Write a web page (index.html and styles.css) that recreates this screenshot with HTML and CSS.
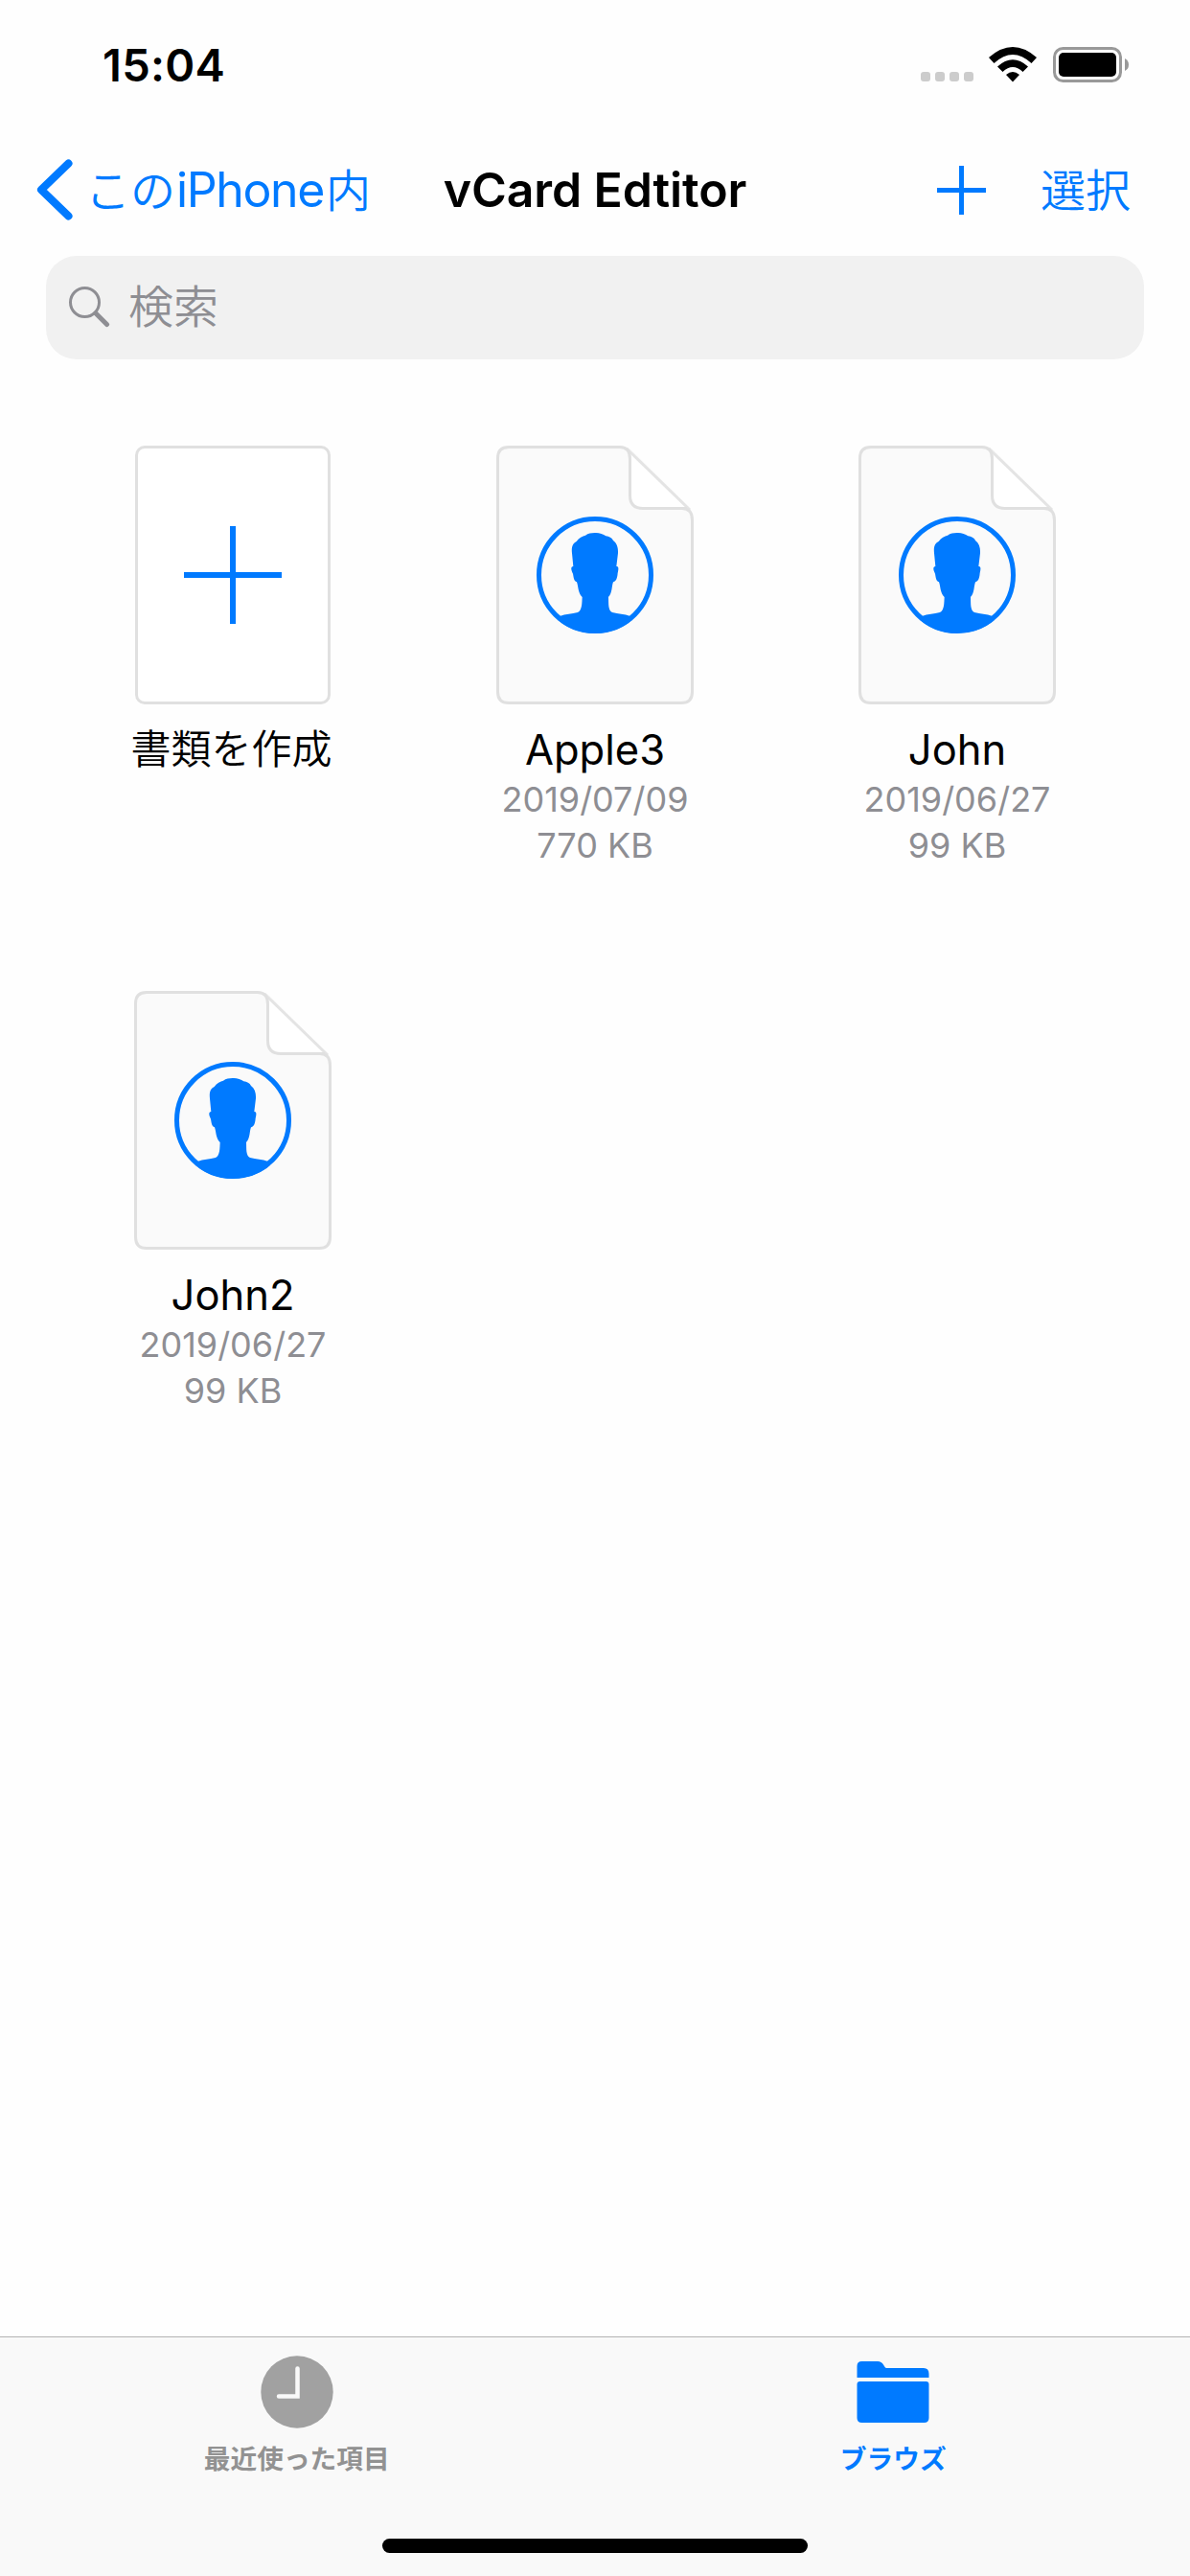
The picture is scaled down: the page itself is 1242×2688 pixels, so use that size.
FILE: index.html
```html
<!DOCTYPE html>
<html lang="ja">
<head>
    <meta charset="UTF-8">
    <meta name="viewport" content="width=device-width, initial-scale=1.0">
    <title>vCard Edtitor</title>
    <link rel="stylesheet" href="styles.css">
</head>
<body>
    <svg class="defs" width="0" height="0">
        <symbol id="contact-file" viewBox="0 0 206 270">
            <path d="M13 1.500H133Q138 1.500 142 5.500L201 65Q204.500 68.500 204.500 75V257Q204.500 268.500 193 268.500H13Q1.500 268.500 1.500 257V13Q1.500 1.500 13 1.500Z" fill="#fafafa"/>
            <path d="M139.500 4V52Q139.500 65.500 153 65.500H199Z" fill="#fff"/>
            <path d="M136 3L202 67" fill="none" stroke="#e4e4e4" stroke-width="3"/>
            <path d="M199 65.500H153Q139.500 65.500 139.500 52V14Q139.500 1.500 129 1.500H13Q1.500 1.500 1.500 13V257Q1.500 268.500 13 268.500H193Q204.500 268.500 204.500 257V78Q204.500 65.500 194 65.500" fill="none" stroke="#e0e0e0" stroke-width="3"/>
            <circle cx="103" cy="135" r="58.500" fill="none" stroke="#007aff" stroke-width="5"/>
            <path transform="translate(-18 -25) scale(.33333)" fill="#007aff" d="M362 348C375 347 388 351 397 358C407 360 416 363 420 372C432 381 436 395 435 412L430 453C438 452 437 462 434 474C433 490 429 500 420 502C415 514 418 536 405 549C406 568 403 590 417 597C436 602 454 601 474 609L480 620A183 183 0 0 1 246 620L252 609C272 601 290 602 309 597C323 590 322 568 323 549C309 536 311 514 306 502C296 498 296 486 294 476C288 464 286 454 295 453L291 412C289 393 292 382 305 375C313 363 324 359 333 356C342 349 351 349 362 348Z"/>
        </symbol>
    </svg>

    <div class="status-bar">
        <div class="time">15:04</div>
        <div class="status-icons">
            <div class="signal"><i></i><i></i><i></i><i></i></div>
            <svg class="wifi" width="50" height="37" viewBox="0 0 50 37">
                <path d="M0 11Q25 -11 50 11L44.500 17Q25 -1 5.500 17Z"/>
                <path d="M9 20.500Q25 6 41 20.500L35.500 26Q25 16 14.500 26Z"/>
                <path d="M18 29Q25 23 32 29L25 36.500Z"/>
            </svg>
            <svg class="battery" width="80" height="37" viewBox="0 0 80 37">
                <rect x="1.500" y="1.500" width="69" height="34" rx="9" fill="none" stroke="#999" stroke-width="3"/>
                <rect x="6" y="6" width="60" height="25" rx="5"/>
                <path d="M75 12Q79 14 79 18.500T75 25Z" fill="#999"/>
            </svg>
        </div>
    </div>

    <div class="nav-bar">
        <div class="back">
            <svg width="38" height="64" viewBox="0 0 38 64">
                <path d="M33.500 4.500L5 32L33.500 59.500" fill="none" stroke="#007aff" stroke-width="8" stroke-linecap="round" stroke-linejoin="round"/>
            </svg>
            <div class="back-label">この<span class="latin">iPhone</span>内</div>
        </div>
        <div class="title">vCard Edtitor</div>
        <div class="actions">
            <svg width="51" height="51" viewBox="0 0 51 51">
                <path d="M0 25.500H51M25.500 0V51" stroke="#007aff" stroke-width="5"/>
            </svg>
            <div class="select">選択</div>
        </div>
    </div>

    <div class="search">
        <svg width="44" height="44" viewBox="0 0 44 44">
            <circle cx="17.500" cy="17.500" r="15" fill="none" stroke="#8e8e93" stroke-width="3"/>
            <path d="M29 29L40.500 40.500" stroke="#8e8e93" stroke-width="5" stroke-linecap="round"/>
        </svg>
        <div class="placeholder">検索</div>
    </div>

    <div class="files">
        <div class="file">
            <div class="new-file">
                <svg width="102" height="102" viewBox="0 0 102 102">
                    <path d="M0 51H102M51 0V102" stroke="#007aff" stroke-width="6"/>
                </svg>
            </div>
            <div class="name name-ja">書類を作成</div>
        </div>
        <div class="file">
            <svg class="thumb" width="206" height="270"><use href="#contact-file"/></svg>
            <div class="name">Apple3</div>
            <div class="meta">2019/07/09</div>
            <div class="meta">770 KB</div>
        </div>
        <div class="file">
            <svg class="thumb" width="206" height="270"><use href="#contact-file"/></svg>
            <div class="name">John</div>
            <div class="meta">2019/06/27</div>
            <div class="meta">99 KB</div>
        </div>
        <div class="file">
            <svg class="thumb" width="206" height="270"><use href="#contact-file"/></svg>
            <div class="name">John2</div>
            <div class="meta">2019/06/27</div>
            <div class="meta">99 KB</div>
        </div>
    </div>

    <div class="bottom">
        <div class="tabs">
            <div class="tab">
                <svg width="76" height="76" viewBox="0 0 76 76">
                    <circle cx="38" cy="38" r="37.700" fill="#a1a1a1"/>
                    <path d="M38.500 13.500V42.500H19" fill="none" stroke="#f9f9f9" stroke-width="4.500" stroke-linecap="round"/>
                </svg>
                <div class="tab-label">最近使った項目</div>
            </div>
            <div class="tab active">
                <svg width="76" height="76" viewBox="0 0 76 76">
                    <path d="M0.500 23V11Q0.500 6 5.500 6H22Q26 6 28 9.500T31 13H70Q75.500 13 75.500 19V23Z"/>
                    <path d="M3.500 27H72.500Q75.500 27 75.500 30V65Q75.500 70 70.500 70H5.500Q0.500 70 0.500 65V30Q0.500 27 3.500 27Z"/>
                </svg>
                <div class="tab-label">ブラウズ</div>
            </div>
        </div>
        <div class="home-indicator"></div>
    </div>
</body>
</html>
```
FILE: styles.css
```css
* {
    box-sizing: border-box;
}
body {
    margin: 0;
    width: 1242px;
    height: 2688px;
    display: flex;
    flex-direction: column;
    overflow: hidden;
    background-color: #fefefe;
    color: #000;
    font-family: Inter, "Noto Sans CJK JP", sans-serif;
}
svg {
    display: block;
    flex: none;
}
.defs {
    position: absolute;
}
.status-bar {
    height: 132px;
    padding: 44px 63px 0 107px;
    display: flex;
    justify-content: space-between;
    align-items: flex-start;
}
.time {
    font-size: 47px;
    line-height: 48px;
    font-weight: 600;
    letter-spacing: 0.3px;
}
.status-icons {
    display: flex;
    align-items: flex-end;
    padding-top: 5px;
}
.signal {
    display: flex;
    gap: 5px;
    margin: 0 16px 1px 0;
}
.signal i {
    width: 10px;
    height: 10px;
    border-radius: 3px;
    background-color: #ccc;
}
.battery {
    margin-left: 17px;
}
.nav-bar {
    height: 135px;
    padding: 0 62px 3px 38px;
    display: grid;
    grid-template-columns: 382px 1fr 358px;
    align-items: center;
    font-size: 50px;
    line-height: 60px;
    white-space: nowrap;
}
.back, .actions {
    display: flex;
    align-items: center;
    color: #007aff;
    font-family: "Noto Sans CJK JP", sans-serif;
    font-size: 47px;
    font-weight: 350;
}
.back-label {
    margin: -3px 0 0 13px;
}
.latin {
    margin: 0 2px 0 1px;
    font-family: Inter, sans-serif;
    font-size: 50px;
    font-weight: 400;
    letter-spacing: -1.4px;
}
.title {
    text-align: center;
    font-weight: 600;
    letter-spacing: -0.1px;
}
.actions {
    justify-content: flex-end;
    gap: 57px;
}
.select {
    margin-top: -5px;
}
.search {
    height: 108px;
    margin: 0 48px;
    padding-left: 23px;
    display: flex;
    align-items: center;
    gap: 19px;
    border-radius: 32px;
    background-color: #f1f1f1;
}
.search svg {
    margin-bottom: 2px;
}
.placeholder {
    margin-top: -8px;
    color: #8e8e93;
    font-family: "Noto Sans CJK JP", sans-serif;
    font-size: 47px;
    font-weight: 350;
    line-height: 60px;
}
.files {
    flex: 1;
    padding: 90px 54px 0;
    display: grid;
    grid-template-columns: repeat(3, 378px);
    grid-auto-rows: 569px;
}
.file {
    display: flex;
    flex-direction: column;
    align-items: center;
}
.new-file {
    width: 204px;
    height: 270px;
    display: flex;
    justify-content: center;
    align-items: center;
    border: 3px solid #e0e0e0;
    border-radius: 10px;
    background-color: #fff;
}
.name {
    margin: 20px 0 1px;
    font-size: 43.5px;
    line-height: 54px;
}
.name-ja {
    margin: 17px 3px 0 0;
    font-family: "Noto Sans CJK JP", sans-serif;
    font-size: 42px;
    font-weight: 350;
}
.meta {
    color: #8e8e93;
    font-size: 36px;
    line-height: 48px;
}
.bottom {
    height: 250px;
    display: flex;
    flex-direction: column;
    align-items: center;
    justify-content: space-between;
    padding-bottom: 24px;
    border-top: 1px solid #b3b3b3;
    background-color: #f9f9f9;
}
.tabs {
    width: 1242px;
    display: flex;
}
.tab {
    flex: 1;
    padding: 19px 3px 0 0;
    display: flex;
    flex-direction: column;
    align-items: center;
    color: #929292;
}
.tab.active {
    padding-right: 0;
    color: #007aff;
    fill: #007aff;
}
.tab-label {
    margin-top: 10px;
    font-family: "Noto Sans CJK JP", sans-serif;
    font-size: 27.7px;
    font-weight: 700;
    line-height: 40px;
}
.home-indicator {
    width: 444px;
    height: 15px;
    border-radius: 8px;
    background-color: #000;
}
```
